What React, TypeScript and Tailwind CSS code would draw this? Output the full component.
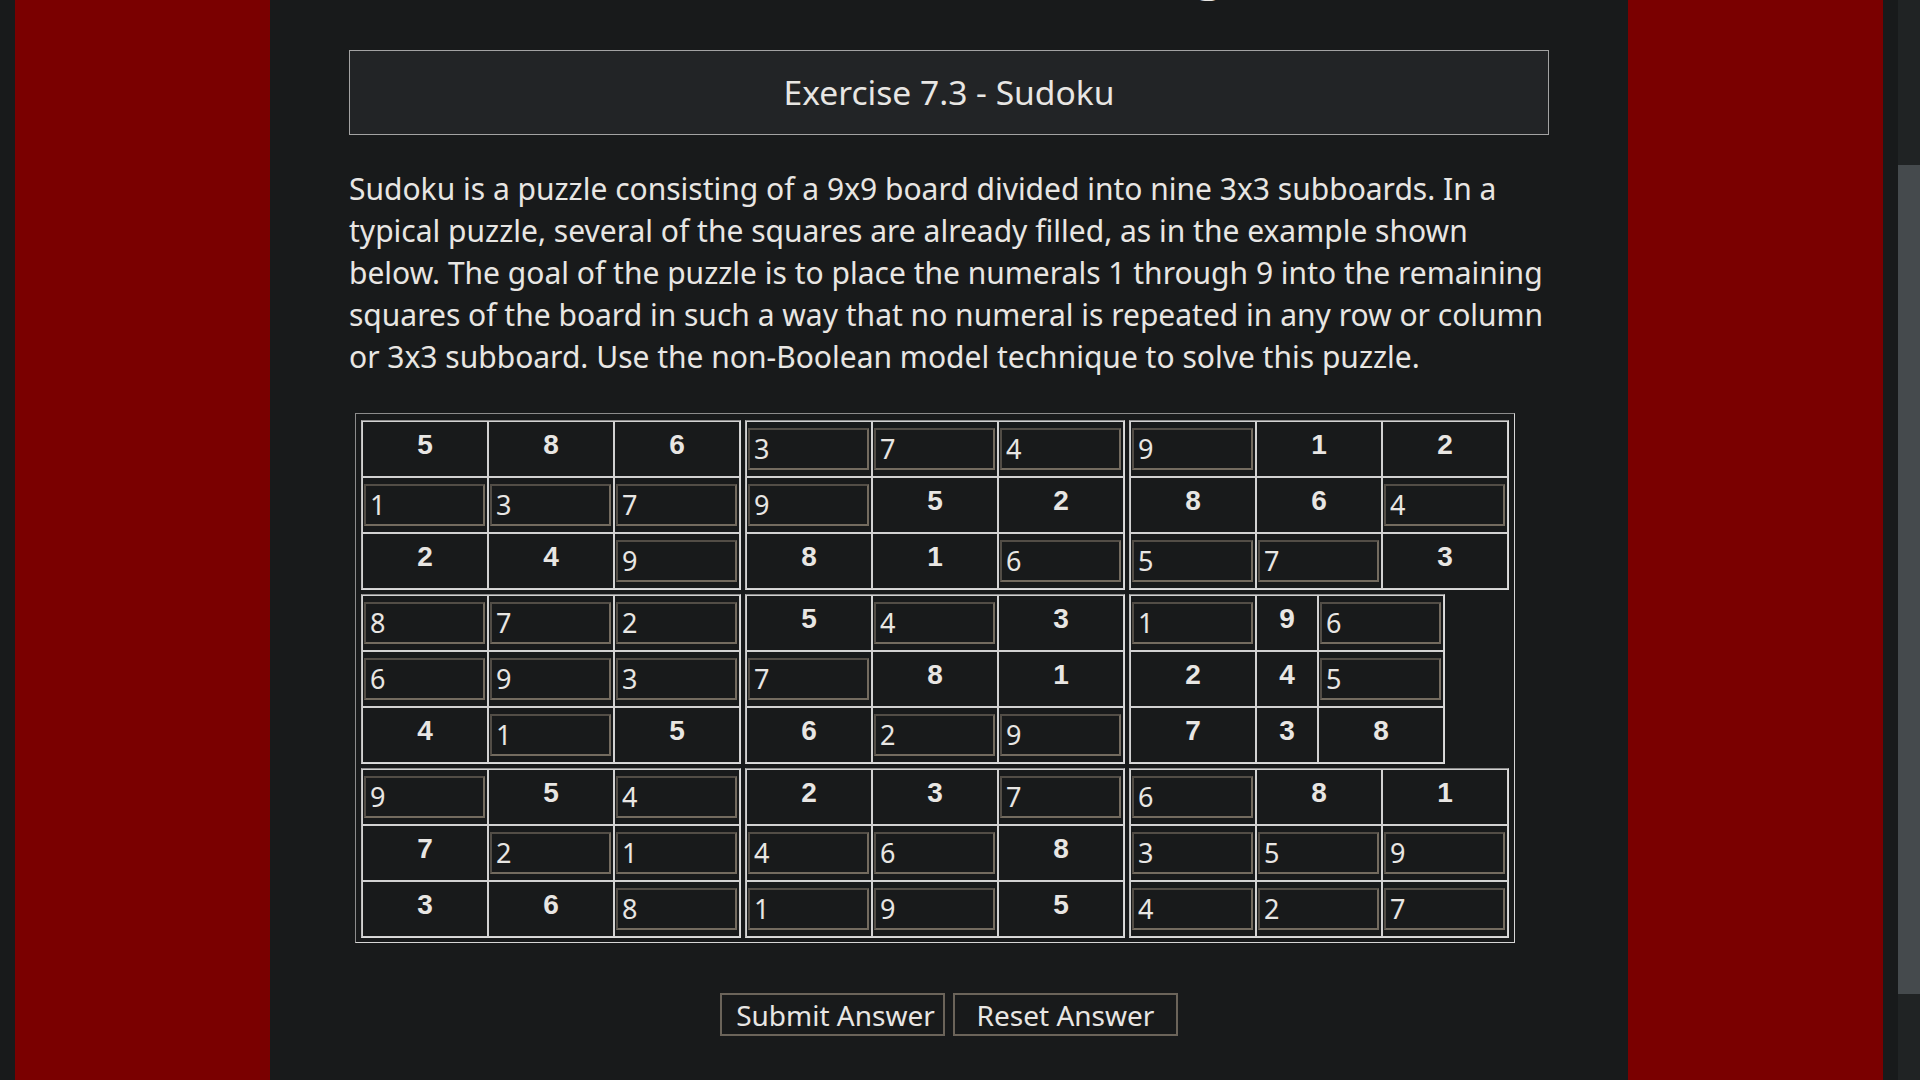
import React from "react";

const ROWS: string[][] = [
  ["5", "8", "6", "_3", "_7", "_4", "_9", "1", "2"],
  ["_1", "_3", "_7", "_9", "5", "2", "8", "6", "_4"],
  ["2", "4", "_9", "8", "1", "_6", "_5", "_7", "3"],
  ["_8", "_7", "_2", "5", "_4", "3", "_1", "9", "_6"],
  ["_6", "_9", "_3", "_7", "8", "1", "2", "4", "_5"],
  ["4", "_1", "5", "6", "_2", "_9", "7", "3", "8"],
  ["_9", "5", "_4", "2", "3", "_7", "_6", "8", "1"],
  ["7", "_2", "_1", "_4", "_6", "8", "_3", "_5", "_9"],
  ["3", "6", "_8", "_1", "_9", "5", "_4", "_2", "_7"],
];

function Cell({ v }: { v: string }) {
  if (v.startsWith("_")) {
    return (
      <div className="flex h-[56px] items-center border border-[#d2d2d2] pl-[1px]">
        <input
          defaultValue={v.slice(1)}
          className="h-[42px] w-[121px] min-w-0 border-2 border-t-[#524d46] border-l-[#524d46] border-r-[#736b5f] border-b-[#736b5f] bg-[#181a1b] pl-[4px] pb-[2px] text-[27px] leading-none text-[#e8e6e3] outline-none [font-family:'Noto_Sans',sans-serif]"
        />
      </div>
    );
  }
  return (
    <div className="flex h-[56px] items-center justify-center border border-[#d2d2d2] pb-[8px] text-[28px] font-bold text-[#e8e6e3] [font-family:'Liberation_Sans',Arial,sans-serif]">
      {v}
    </div>
  );
}

function Block({ br, bc }: { br: number; bc: number }) {
  const narrow = br === 1 && bc === 2;
  const cells: string[] = [];
  for (let r = 0; r < 3; r++) {
    for (let c = 0; c < 3; c++) {
      cells.push(ROWS[br * 3 + r][bc * 3 + c]);
    }
  }
  return (
    <div className="w-[380px] self-start">
      <div
        className={
          (narrow
            ? "grid grid-cols-[126px_62px_126px] w-fit "
            : "grid grid-cols-[126px_126px_126px] w-fit ") +
          "border border-t-[#8c8c8c] border-l-[#bdbdbd] border-r-[#dcdcdc] border-b-[#dcdcdc]"
        }
      >
        {cells.map((v, i) => (
          <Cell key={i} v={v} />
        ))}
      </div>
    </div>
  );
}

export default function App() {
  return (
    <div className="flex h-[1080px] w-full overflow-hidden bg-[#181a1b] text-[#e8e6e3] [font-family:'Noto_Sans',sans-serif]">
      <div className="w-[15px] shrink-0 bg-[#181a1b]" />
      <div className="w-[255px] shrink-0 bg-[#7a0000]" />
      <main className="w-[1358px] shrink-0 bg-[#181a1b] px-[79px]">
        <div className="h-[3px] overflow-hidden pl-[846px]">
          <div className="-mt-[53px] text-[48px] font-bold leading-none text-[#e8e6e3]">g</div>
        </div>
        <div className="mt-[47px] flex h-[85px] w-[1200px] items-center justify-center border border-[#a3a3a3] bg-[#222426] text-[33.6px]">
          Exercise 7.3 - Sudoku
        </div>
        <p className="mt-[33px] w-[1200px] text-[30px] leading-[42px]">
          Sudoku is a puzzle consisting of a 9x9 board divided into nine 3x3 subboards. In a typical
          puzzle, several of the squares are already filled, as in the example shown below. The goal
          of the puzzle is to place the numerals 1 through 9 into the remaining squares of the board
          in such a way that no numeral is repeated in any row or column or 3x3 subboard. Use the
          non-Boolean model technique to solve this puzzle.
        </p>
        <div className="mt-[35px] ml-[6px] flex w-fit flex-col gap-[4px] border border-t-[#8c8c8c] border-l-[#8c8c8c] border-r-[#d6d6d6] border-b-[#d6d6d6] px-[5px] pt-[6px] pb-[4px]">
          {[0, 1, 2].map((br) => (
            <div key={br} className="flex gap-[4px]">
              {[0, 1, 2].map((bc) => (
                <Block key={bc} br={br} bc={bc} />
              ))}
            </div>
          ))}
        </div>
        <div className="mt-[50px] flex justify-center gap-[8px]">
          <button className="h-[43px] w-[225px] border-2 border-[#6b645a] bg-[#181a1b] pl-[6px] text-[28px] leading-none text-[#e8e6e3]">
            Submit Answer
          </button>
          <button className="h-[43px] w-[225px] border-2 border-[#6b645a] bg-[#181a1b] text-[28px] leading-none text-[#e8e6e3]">
            Reset Answer
          </button>
        </div>
      </main>
      <div className="w-[255px] shrink-0 bg-[#7a0000]" />
      <div className="w-[15px] shrink-0 bg-[#181a1b]" />
      <div className="flex w-[22px] shrink-0 flex-col bg-[#202324]">
        <div className="h-[165px]" />
        <div className="h-[829px] bg-[#454a4d]" />
      </div>
    </div>
  );
}
